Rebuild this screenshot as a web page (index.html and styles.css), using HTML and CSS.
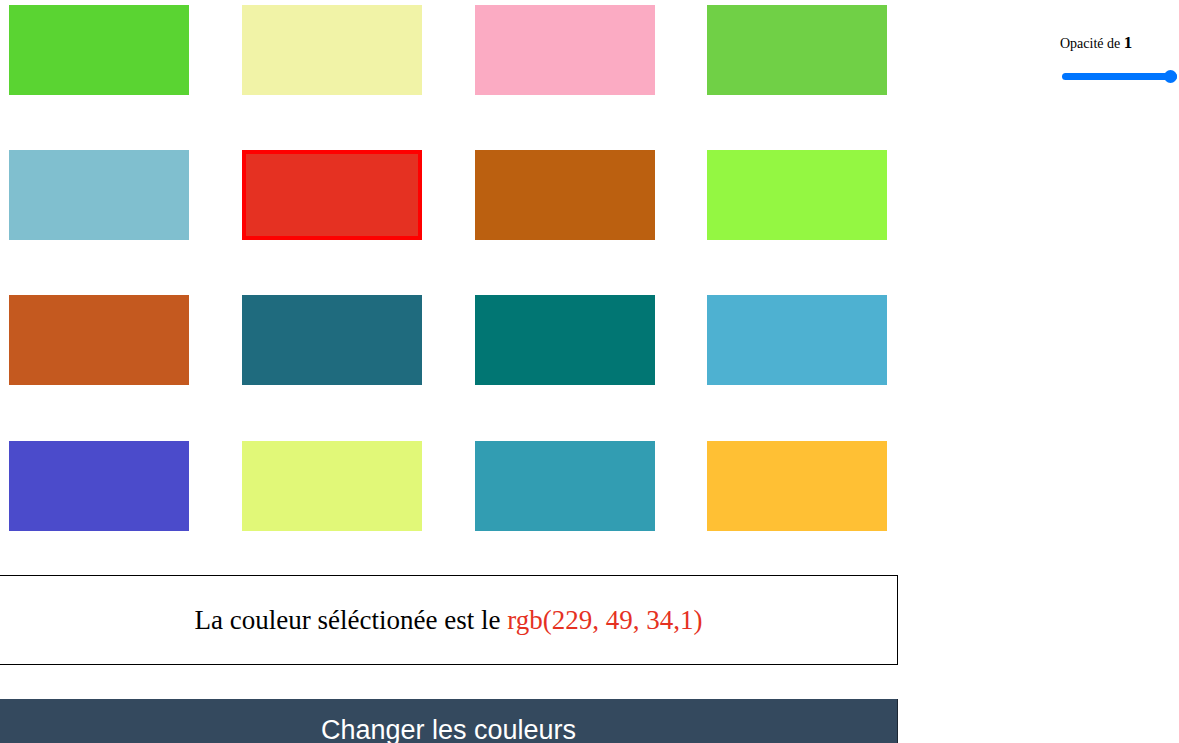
FILE: index.html
```html
<!DOCTYPE html>
<html lang="fr">
<head>
<meta charset="utf-8">
<title>Couleurs</title>
<link rel="stylesheet" href="styles.css">
</head>
<body>
<div class="page">
  <main class="main">
    <div class="grid">
      <div class="swatch" style="background: rgb(90, 212, 50)"></div>
      <div class="swatch" style="background: rgb(241, 243, 167)"></div>
      <div class="swatch" style="background: rgb(251, 171, 195)"></div>
      <div class="swatch" style="background: rgb(112, 208, 70)"></div>
      <div class="swatch" style="background: rgb(128, 191, 207)"></div>
      <div class="swatch selected" style="background: rgb(229, 49, 34)"></div>
      <div class="swatch" style="background: rgb(187, 96, 16)"></div>
      <div class="swatch" style="background: rgb(148, 247, 66)"></div>
      <div class="swatch" style="background: rgb(196, 89, 31)"></div>
      <div class="swatch" style="background: rgb(31, 107, 126)"></div>
      <div class="swatch" style="background: rgb(1, 118, 115)"></div>
      <div class="swatch" style="background: rgb(78, 177, 209)"></div>
      <div class="swatch" style="background: rgb(75, 75, 203)"></div>
      <div class="swatch" style="background: rgb(225, 248, 120)"></div>
      <div class="swatch" style="background: rgb(50, 157, 178)"></div>
      <div class="swatch" style="background: rgb(255, 192, 52)"></div>
    </div>
    <div class="result">
      <p class="result-text">La couleur séléctionée est le <span class="result-value">rgb(229, 49, 34,1)</span></p>
    </div>
    <button class="change-btn" type="button">Changer les couleurs</button>
  </main>
  <aside class="side">
    <label class="opacity-label" for="opacity">Opacité de <b class="opacity-value">1</b></label>
    <input class="opacity-range" id="opacity" type="range" min="0" max="1" step="0.1" value="1">
  </aside>
</div>
</body>
</html>
```
FILE: styles.css
```css
html, body {
  margin: 0;
  padding: 0;
  background: #ffffff;
  overflow: hidden;
}

body {
  font-family: "Liberation Serif", "Times New Roman", serif;
  color: #000;
}

.page {
  display: flex;
  align-items: flex-start;
  height: 743px;
}

.main {
  width: 898px;
  flex: none;
  display: flex;
  flex-direction: column;
}

.grid {
  display: grid;
  grid-template-columns: repeat(4, 180px);
  grid-auto-rows: 90px;
  justify-content: start;
  column-gap: 52.8px;
  row-gap: 55.2px;
  padding: 5px 0 0 9px;
}

.swatch {
  box-sizing: border-box;
  width: 180px;
  height: 90px;
}

.swatch.selected {
  border: 4px solid #ff0000;
}

.result {
  box-sizing: border-box;
  height: 90px;
  margin: 44px 0 0 -1px;
  border: 1px solid #000;
  display: flex;
  align-items: center;
  justify-content: center;
}

.result-text {
  margin: 0;
  font-size: 27px;
  line-height: 1;
  padding-top: 2px;
}

.result-value {
  color: rgb(229, 49, 34);
}

.change-btn {
  margin-top: 34px;
  height: 80px;
  border: none;
  border-right: 1px solid #1c2733;
  background: #34495e;
  color: #ffffff;
  font-family: "Liberation Sans", Arial, sans-serif;
  font-size: 27px;
  padding: 16px 0 0;
  display: flex;
  justify-content: center;
  align-items: flex-start;
}

.side {
  flex: 1;
  display: flex;
  flex-direction: column;
  padding: 33px 0 0 162px;
}

.opacity-label {
  font-size: 14px;
  line-height: 20px;
}

.opacity-value {
  font-size: 17px;
}

.opacity-range {
  -webkit-appearance: none;
  appearance: none;
  margin: 15px 0 0 2px;
  width: 115px;
  height: 14px;
  background: transparent;
  padding: 0;
}

.opacity-range::-webkit-slider-runnable-track {
  height: 7px;
  background: #0075ff;
  border-radius: 4px;
}

.opacity-range::-webkit-slider-thumb {
  -webkit-appearance: none;
  appearance: none;
  width: 13px;
  height: 13px;
  margin-top: -3px;
  border-radius: 50%;
  background: #0075ff;
}
```
